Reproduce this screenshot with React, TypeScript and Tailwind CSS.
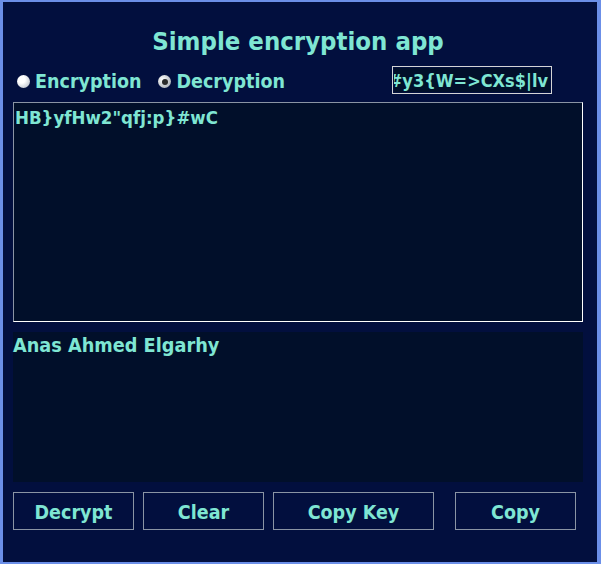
import { useState } from "react";

const font = { fontFamily: '"DejaVu Sans Condensed", "DejaVu Sans", sans-serif' };

function Radio({ label, checked, onClick }: { label: string; checked: boolean; onClick: () => void }) {
  return (
    <button onClick={onClick} className="flex items-center gap-[5px] pt-[3px] text-[19.5px] font-bold text-[#7fe6d3]">
      {checked ? (
        <span className="flex h-[13px] w-[13px] items-center justify-center rounded-full bg-[radial-gradient(circle_at_35%_35%,#ffffff,#9aa0a8)]">
          <span className="h-[6px] w-[6px] rounded-full bg-[#2a2a2a]" />
        </span>
      ) : (
        <span className="h-[13px] w-[13px] rounded-full bg-[radial-gradient(circle_at_35%_35%,#ffffff_30%,#a8b0bc)]" />
      )}
      {label}
    </button>
  );
}

function Btn({ label, w }: { label: string; w: string }) {
  return (
    <button className={`${w} h-[38px] border border-[#8a94a4] pt-[3px] text-[19.5px] font-bold text-[#7fe6d3]`}>{label}</button>
  );
}

export default function App() {
  const [mode, setMode] = useState<"enc" | "dec">("dec");

  return (
    <div
      style={font}
      className="flex h-[564px] w-[601px] flex-col border-b-2 border-l-[3px] border-r-4 border-t-2 border-[#6b8fe8] bg-[#020f3e] pl-[10px] pr-[14px]"
    >
      <h1 className="mt-[24px] text-center text-[25.5px] font-bold leading-[30px] text-[#7fe6d3]">
        Simple encryption app
      </h1>

      <div className="mt-[10px] flex h-[28px] items-center">
        <div className="ml-[4px] flex gap-[17px]">
          <Radio label="Encryption" checked={mode === "enc"} onClick={() => setMode("enc")} />
          <Radio label="Decryption" checked={mode === "dec"} onClick={() => setMode("dec")} />
        </div>
        <div className="ml-auto mr-[31px] h-[28px] w-[160px] border border-[#d4d4d4] p-px">
          <div className="flex h-full items-center justify-end overflow-hidden whitespace-nowrap bg-[#010f2a] pr-[2px] pt-px text-[18px] font-bold leading-none text-[#7fe6d3]">
            <span className="shrink-0">#y3&#123;W=&gt;CXs$|lv</span>
          </div>
        </div>
      </div>

      <div className="mt-[8px] h-[220px] border border-b-white border-l-[#8a94a4] border-r-white border-t-[#8a94a4] bg-[#010f2a] px-[1px] pt-[3px] text-[18.5px] font-bold leading-[24px] text-[#7fe6d3]">
        HB&#125;yfHw2"qfj:p&#125;#wC
      </div>

      <div className="mt-[10px] h-[150px] bg-[#010f2a] pt-[2px] text-[19.7px] font-bold leading-[24px] text-[#7fe6d3]">
        Anas Ahmed Elgarhy
      </div>

      <div className="mt-[10px] flex">
        <Btn label="Decrypt" w="w-[121px]" />
        <div className="ml-[9px]"><Btn label="Clear" w="w-[121px]" /></div>
        <div className="ml-[9px]"><Btn label="Copy Key" w="w-[161px]" /></div>
        <div className="ml-[21px]"><Btn label="Copy" w="w-[121px]" /></div>
      </div>
    </div>
  );
}
